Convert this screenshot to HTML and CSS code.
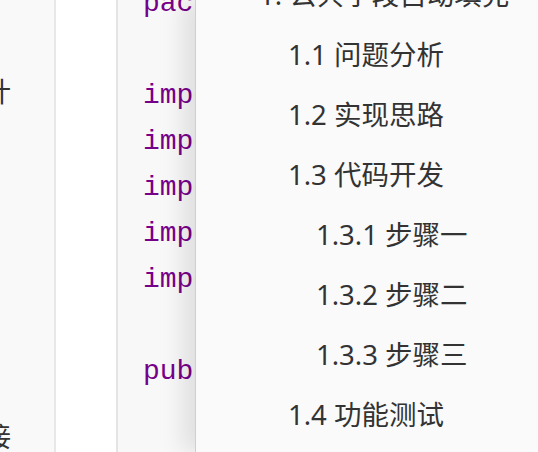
FILE: index.html
```html
<!DOCTYPE html>
<html lang="zh">
<head>
<meta charset="utf-8">
<title>TOC</title>
<link rel="stylesheet" href="styles.css">
</head>
<body>
<div class="page">
  <aside class="sidebar">
    <div class="side-line">设计</div>
    <div class="side-line side-line-bottom">连接</div>
  </aside>
  <main class="main">
    <div class="code-block">
      <pre class="code"><span class="kw">package</span> com.sky;

<span class="kw">import</span> a;
<span class="kw">import</span> b;
<span class="kw">import</span> c;
<span class="kw">import</span> d;
<span class="kw">import</span> e;

<span class="kw">public</span> class</pre>
    </div>
  </main>
  <nav class="toc">
    <ul class="toc-list">
      <li class="toc-item lvl1">1. 公共字段自动填充</li>
      <li class="toc-item lvl2">1.1 问题分析</li>
      <li class="toc-item lvl2">1.2 实现思路</li>
      <li class="toc-item lvl2">1.3 代码开发</li>
      <li class="toc-item lvl3">1.3.1 步骤一</li>
      <li class="toc-item lvl3">1.3.2 步骤二</li>
      <li class="toc-item lvl3">1.3.3 步骤三</li>
      <li class="toc-item lvl2">1.4 功能测试</li>
    </ul>
  </nav>
</div>
</body>
</html>
```
FILE: styles.css
```css
html, body {
  margin: 0;
  padding: 0;
  background: #ffffff;
}
.page {
  position: relative;
  width: 538px;
  height: 452px;
  overflow: hidden;
  display: flex;
}
.sidebar {
  width: 54px;
  flex: none;
  background: #f9f9f9;
  border-right: 2px solid #e8e8e8;
  overflow: hidden;
  padding-top: 77px;
  font-family: "Noto Sans CJK SC", "Noto Sans", sans-serif;
  font-size: 27px;
  line-height: 27px;
  color: #333333;
}
.side-line {
  margin-left: -43px;
  white-space: nowrap;
  height: 27px;
}
.side-line-bottom {
  margin-top: 318px;
}
.main {
  flex: 1;
  background: #ffffff;
  padding-left: 60px;
  overflow: hidden;
}
.code-block {
  height: 100%;
  background: #f8f8f8;
  border-left: 2px solid #e4e4e4;
  padding-left: 25px;
  overflow: hidden;
}
.code {
  margin: -19px 0 0 0;
  font-family: "Liberation Mono", "Courier New", monospace;
  font-size: 28px;
  line-height: 46px;
  color: #333333;
  white-space: pre;
}
.code .kw {
  color: #770088;
}
.toc {
  position: absolute;
  top: 0;
  right: 0;
  width: 342px;
  height: 452px;
  background: #fafafa;
  border-left: 1px solid #cfcfcf;
  box-shadow: -12px 0 22px rgba(0, 0, 0, 0.10);
  overflow: hidden;
}
.toc-list {
  list-style: none;
  margin: -35px 0 0 0;
  padding: 0;
  font-family: "Noto Sans", "Noto Sans CJK SC", sans-serif;
  font-size: 27.5px;
  line-height: 60px;
  color: #333333;
}
.toc-item {
  white-space: nowrap;
}
.lvl1 { padding-left: 63px; }
.lvl2 { padding-left: 92px; }
.lvl3 { padding-left: 120px; }
```
